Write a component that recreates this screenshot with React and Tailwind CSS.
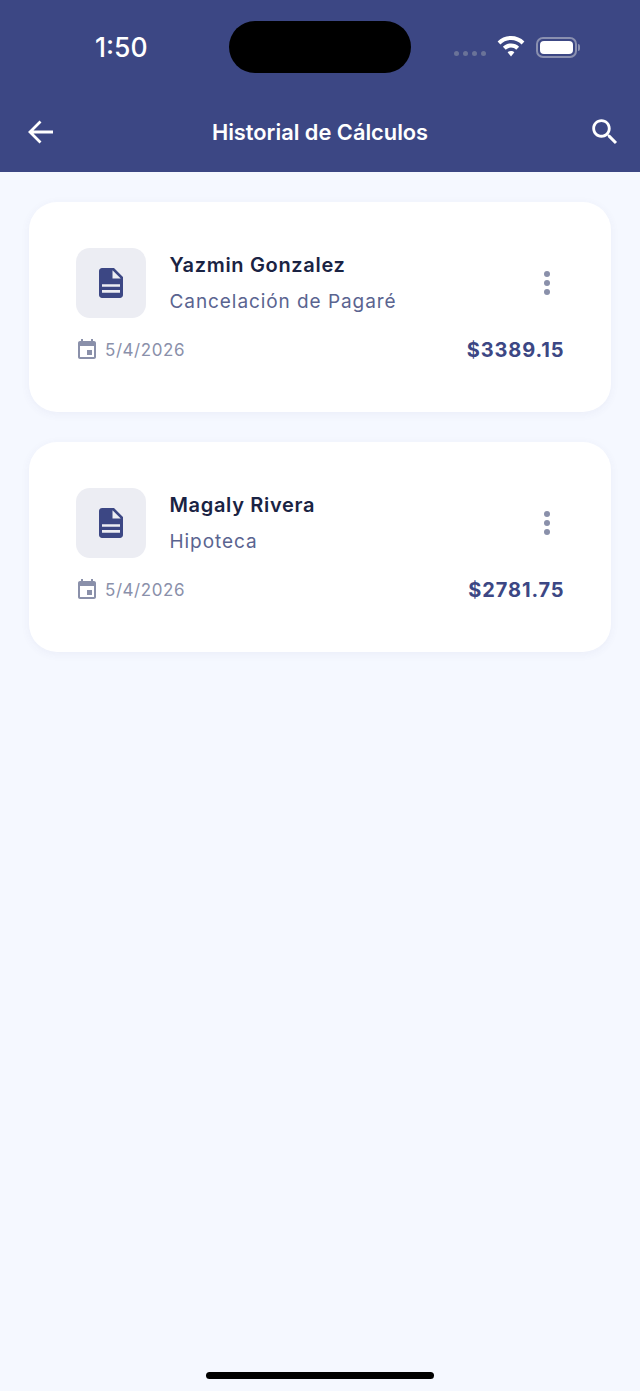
const items = [
  { name: "Yazmin Gonzalez", type: "Cancelación de Pagaré", date: "5/4/2026", amount: "$3389.15" },
  { name: "Magaly Rivera", type: "Hipoteca", date: "5/4/2026", amount: "$2781.75" },
];

function DocIcon() {
  return (
    <svg className="w-9 h-9 text-[#3c4784]" viewBox="0 0 24 24" fill="currentColor">
      <path
        fillRule="evenodd"
        d="M14 2H6c-1.100 0-2 .9-2 2v16c0 1.100.9 2 2 2h12c1.100 0 2-.9 2-2V8l-6-6zM6 12.800h12v1.700H6zM6 16.700h12v1.800H6zM13 9V3.500L18.500 9H13z"
      />
    </svg>
  );
}

function CalendarIcon() {
  return (
    <svg className="w-6 h-6 text-[#8a90aa]" viewBox="0 0 24 24" fill="currentColor">
      <path d="M17 12h-5v5h5v-5zM16 1v2H8V1H6v2H5c-1.11 0-1.99.9-1.99 2L3 19c0 1.1.89 2 2 2h14c1.1 0 2-.9 2-2V5c0-1.1-.9-2-2-2h-1V1h-2zm3 18H5V8h14v11z" />
    </svg>
  );
}

function Card({ item }) {
  return (
    <div className="bg-white rounded-[28px] h-[210px] pl-[47px] pr-[46.500px] pt-[46px] shadow-[0_2px_10px_rgba(60,71,132,0.06)]">
      <div className="flex items-center">
        <div className="w-[70px] h-[70px] rounded-[14px] bg-[#ecedf3] flex items-center justify-center">
          <DocIcon />
        </div>
        <div className="ml-[23.5px] flex-1 pt-[1px]">
          <div className="text-[20px] leading-[28px] font-semibold tracking-[0.67px] text-[#1a2343]">{item.name}</div>
          <div className="mt-[9.5px] text-[19px] leading-[28px] tracking-[0.93px] text-[#5a6490]">{item.type}</div>
        </div>
        <svg className="w-[30px] h-[30px] text-[#8a90aa] mr-[2.500px]" viewBox="0 0 30 30" fill="currentColor">
          <circle cx="15" cy="6" r="3" />
          <circle cx="15" cy="15" r="3" />
          <circle cx="15" cy="24" r="3" />
        </svg>
      </div>
      <div className="flex items-center justify-between mt-5">
        <div className="flex items-center -ml-[1px]">
          <CalendarIcon />
          <span className="ml-[6px] text-[17px] leading-6 tracking-[0.55px] text-[#8a90aa]">{item.date}</span>
        </div>
        <div className="text-[20px] leading-6 font-bold tracking-[0.9px] text-[#3c4784]">{item.amount}</div>
      </div>
    </div>
  );
}

export default function App() {
  return (
    <div className="min-h-[1391px] flex flex-col bg-[#f5f8ff] font-['Inter',sans-serif]">
      <header className="bg-[#3c4784] h-[172px] text-white">
        <div className="flex items-start h-[92px] pt-[21px]">
          <div className="w-[229px] pl-[95px] pt-[10px] text-[26.5px] leading-8 font-medium">1:50</div>
          <div className="w-[182px] h-[52px] bg-black rounded-[27px]"></div>
          <div className="flex items-center pl-[43px] pt-[12px] h-[40px]">
            <div className="flex gap-1 mt-[13px]">
              <span className="w-[5px] h-[5px] rounded-full bg-[#6a7398]"></span>
              <span className="w-[5px] h-[5px] rounded-full bg-[#6a7398]"></span>
              <span className="w-[5px] h-[5px] rounded-full bg-[#6a7398]"></span>
              <span className="w-[5px] h-[5px] rounded-full bg-[#6a7398]"></span>
            </div>
            <svg className="ml-[11px] -mt-[1px]" width="28" height="21" viewBox="0 0 28 21" fill="white">
              <path d="M14 0C8.8 0 4.1 2 .6 5.4L3.4 8.4C6.2 5.7 9.9 4 14 4s7.8 1.7 10.6 4.4l2.8-3C23.9 2 19.2 0 14 0z" />
              <path d="M14 7.5c-3.2 0-6 1.2-8.1 3.2l2.9 3c1.4-1.3 3.2-2.1 5.2-2.1s3.8.8 5.2 2.1l2.9-3C20 8.7 17.2 7.5 14 7.500z" />
              <path d="M14 15c-1.3 0-2.5.5-3.4 1.3L14 20.500l3.400-4.200C16.500 15.500 15.300 15 14 15z" />
            </svg>
            <div className="ml-[11px] flex items-center">
              <div className="w-[41px] h-[21px] rounded-[7px] border-2 border-[#8a90b0] p-[2px]">
                <div className="w-full h-full rounded-[4px] bg-white"></div>
              </div>
              <div className="w-[2px] h-[7px] rounded-r-sm bg-[#8a90b0] ml-[1px]"></div>
            </div>
          </div>
        </div>
        <div className="grid grid-cols-[1fr_auto_1fr] items-center h-[80px] pl-[24px] pr-[18px]">
          <svg className="w-[34px] h-[34px]" viewBox="0 0 34 34" fill="none" stroke="white" strokeWidth="2.800">
            <path d="M29 17H7M16.500 6.500 6 17 16.500 27.500" />
          </svg>
          <h1 className="text-[21.800px] leading-7 font-semibold -ml-[6px]">Historial de Cálculos</h1>
          <svg className="w-[34px] h-[34px] justify-self-end" viewBox="0 0 24 24" fill="white">
            <path d="M15.5 14h-.79l-.28-.27C15.41 12.59 16 11.11 16 9.5 16 5.910 13.090 3 9.500 3S3 5.910 3 9.500 5.910 16 9.500 16c1.610 0 3.090-.59 4.230-1.570l.27.28v.79l5 4.990L20.490 19l-4.990-5zm-6 0C7.010 14 5 11.990 5 9.500S7.010 5 9.500 5 14 7.010 14 9.500 11.990 14 9.500 14z" />
          </svg>
        </div>
      </header>

      <main className="flex-1 flex flex-col gap-[30px] pt-[30px] px-[29px]">
        {items.map((item) => (
          <Card key={item.name} item={item} />
        ))}
      </main>

      <div className="flex justify-center pb-[12px]">
        <div className="w-[228px] h-[7px] rounded-full bg-black"></div>
      </div>
    </div>
  );
}
